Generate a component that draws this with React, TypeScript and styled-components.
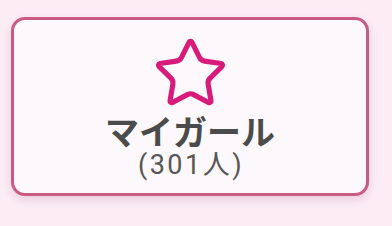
import React from 'react';
import styled, { createGlobalStyle } from 'styled-components';

const GlobalStyle = createGlobalStyle`
  html, body {
    margin: 0;
    padding: 0;
    background: #fcedf5;
  }
  body {
    font-family: Roboto, "Noto Sans CJK JP", sans-serif;
  }
`;

const Page = styled.div`
  width: 392px;
  height: 226px;
  box-sizing: border-box;
  padding: 17px 0 0 11px;
`;

const Card = styled.div`
  width: 358px;
  height: 179px;
  box-sizing: border-box;
  border: 3px solid #c95b81;
  border-radius: 14px;
  background: #fdf8fb;
  box-shadow: 0 4px 10px rgba(160, 60, 100, 0.18);
  display: flex;
  flex-direction: column;
  align-items: center;
  padding-top: 15px;
`;

const StarIcon = styled.svg`
  display: block;
`;

const Title = styled.div`
  font-family: "Noto Sans CJK JP", sans-serif;
  font-weight: 700;
  font-size: 34px;
  line-height: 37px;
  color: #4b4b4b;
`;

const Count = styled.div`
  font-family: Roboto, "Noto Sans CJK JP", sans-serif;
  font-weight: 400;
  font-size: 27px;
  line-height: 30px;
  letter-spacing: 2.5px;
  padding-left: 2px;
  margin-top: 1px;
  color: #575757;
`;

const Star = () => (
  <StarIcon width="77" height="77" viewBox="0 0 24 24" fill="none" stroke="#d81b7a" strokeWidth="1.6" strokeLinecap="round" strokeLinejoin="round">
    <path d="M11.525 2.295a.53.53 0 0 1 .95 0l2.31 4.679a2.123 2.123 0 0 0 1.595 1.16l5.166.756a.53.53 0 0 1 .294.904l-3.736 3.638a2.123 2.123 0 0 0-.611 1.878l.882 5.14a.53.53 0 0 1-.771.56l-4.618-2.428a2.122 2.122 0 0 0-1.973 0L6.396 21.01a.53.53 0 0 1-.77-.56l.881-5.139a2.122 2.122 0 0 0-.611-1.879L2.16 9.795a.53.53 0 0 1 .294-.906l5.165-.755a2.122 2.122 0 0 0 1.597-1.16z" />
  </StarIcon>
);

const App = () => (
  <>
    <GlobalStyle />
    <Page>
      <Card>
        <Star />
        <Title>マイガール</Title>
        <Count>(301人)</Count>
      </Card>
    </Page>
  </>
);

export default App;
